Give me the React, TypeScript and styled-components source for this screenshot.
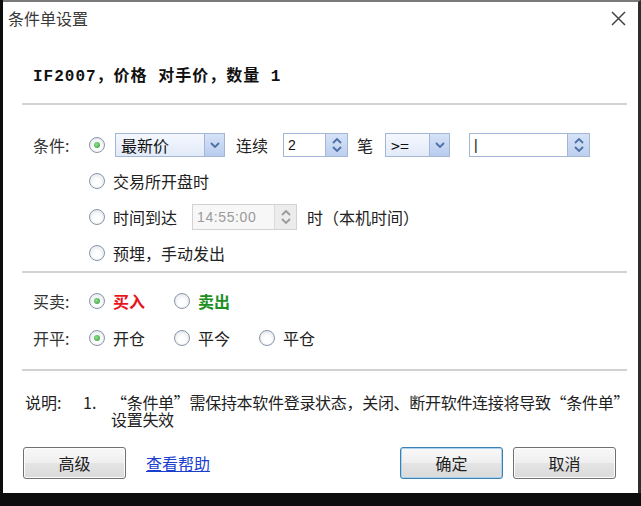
import React from "react";
import styled, { createGlobalStyle } from "styled-components";

const GlobalStyle = createGlobalStyle`
  body {
    margin: 0;
    background: #0d0d0d;
    font-family: "Noto Sans CJK SC", "Noto Sans", sans-serif;
  }
`;

const Chevron = ({ up = false, color = "#4d6fa8" }: { up?: boolean; color?: string }) => (
  <svg width="10" height="6" viewBox="0 0 10 6">
    <path
      d={up ? "M1 5 L5 1 L9 5" : "M1 1 L5 5 L9 1"}
      fill="none"
      stroke={color}
      strokeWidth="1.8"
    />
  </svg>
);

const SelectBox = ({ value, width, ml }: { value: string; width: number; ml: number }) => (
  <Select $w={width} $ml={ml}>
    <SelectValue>{value}</SelectValue>
    <DropButton>
      <Chevron />
    </DropButton>
  </Select>
);

const SpinBox = ({
  value,
  width,
  ml,
  disabled = false,
}: {
  value: string;
  width: number;
  ml: number;
  disabled?: boolean;
}) => (
  <Spin $w={width} $ml={ml} $disabled={disabled}>
    <SpinValue $disabled={disabled}>{value}</SpinValue>
    <SpinButton $disabled={disabled}>
      <Chevron up color={disabled ? "#9a9a9a" : "#4d6fa8"} />
      <Chevron color={disabled ? "#9a9a9a" : "#4d6fa8"} />
    </SpinButton>
  </Spin>
);

const RadioOption = ({
  checked = false,
  children,
  tone,
}: {
  checked?: boolean;
  children?: React.ReactNode;
  tone?: "buy" | "sell";
}) => (
  <Option>
    <Radio $checked={checked} />
    {children && <OptionText $tone={tone}>{children}</OptionText>}
  </Option>
);

const App = () => {
  return (
    <Frame>
      <GlobalStyle />
      <Dialog>
        <TitleBar>
          <Title>条件单设置</Title>
          <svg width="17" height="17" viewBox="0 0 17 17">
            <path d="M2 2 L15 15 M15 2 L2 15" stroke="#444" strokeWidth="1.5" />
          </svg>
        </TitleBar>

        <Summary>IF2007，价格 对手价，数量 1</Summary>
        <Divider />

        <ConditionSection>
          <Row>
            <Label>条件:</Label>
            <RadioOption checked />
            <SelectBox value="最新价" width={110} ml={10} />
            <Text $ml={11}>连续</Text>
            <SpinBox value="2" width={65} ml={15} />
            <Text $ml={9}>笔</Text>
            <SelectBox value=">=" width={65} ml={12} />
            <SpinBox value="|" width={121} ml={19} />
          </Row>
          <Row $indent>
            <RadioOption>交易所开盘时</RadioOption>
          </Row>
          <Row $indent>
            <RadioOption>时间到达</RadioOption>
            <SpinBox value="14:55:00" width={105} ml={15} disabled />
            <Text $ml={10}>时（本机时间）</Text>
          </Row>
          <Row $indent>
            <RadioOption>预埋，手动发出</RadioOption>
          </Row>
        </ConditionSection>
        <Divider />

        <TradeSection>
          <TradeRow>
            <Label>买卖:</Label>
            <Options>
              <RadioOption checked tone="buy">买入</RadioOption>
              <RadioOption tone="sell">卖出</RadioOption>
            </Options>
          </TradeRow>
          <TradeRow>
            <Label>开平:</Label>
            <Options>
              <RadioOption checked>开仓</RadioOption>
              <RadioOption>平今</RadioOption>
              <RadioOption>平仓</RadioOption>
            </Options>
          </TradeRow>
        </TradeSection>
        <Divider />

        <Note>
          <NoteLabel>说明:</NoteLabel>
          <NoteNum>1.</NoteNum>
          <NoteText>
            <NoteLine>“条件单”需保持本软件登录状态，关闭、断开软件连接将导致“条件单”</NoteLine>
            <NoteLine>设置失效</NoteLine>
          </NoteText>
        </Note>

        <Footer>
          <Button>高级</Button>
          <HelpLink href="#">查看帮助</HelpLink>
          <Spacer />
          <Button $primary>确定</Button>
          <Button>取消</Button>
        </Footer>
      </Dialog>
    </Frame>
  );
};

export default App;

const Frame = styled.div`
  width: 641px;
  height: 506px;
  background: #0d0d0d;
  overflow: hidden;
`;

const Dialog = styled.div`
  margin-left: 3px;
  width: 635px;
  height: 491px;
  border-top: 2px solid #7a7a7a;
  border-right: 3px solid #2e2e2e;
  background: #fff;
  display: flex;
  flex-direction: column;
`;

const TitleBar = styled.div`
  height: 32px;
  display: flex;
  align-items: center;
  justify-content: space-between;
  padding: 0 11px 0 5px;
`;

const Title = styled.span`
  font-size: 16px;
  color: #3a3a3a;
`;

const Summary = styled.div`
  margin: 33px 0 16px 30px;
  font-family: "Liberation Mono", "Noto Sans CJK SC", monospace;
  font-size: 16px;
  line-height: 20px;
  letter-spacing: 1px;
  font-weight: bold;
  color: #111;
`;

const Divider = styled.div`
  height: 2px;
  background: #d2d2d2;
  margin: 0 11px 0 19px;
`;

const ConditionSection = styled.div`
  padding: 22px 0 0 30px;
`;

const Row = styled.div<{ $indent?: boolean }>`
  height: 36px;
  display: flex;
  align-items: center;
  padding-left: ${(p) => (p.$indent ? "55px" : "0")};
`;

const Label = styled.span`
  width: 55px;
  font-size: 16px;
  color: #333;
`;

const Text = styled.span<{ $ml: number }>`
  margin-left: ${(p) => p.$ml}px;
  font-size: 16px;
  color: #222;
  white-space: nowrap;
`;

const Option = styled.label`
  display: flex;
  align-items: center;
  gap: 8px;
`;

const Radio = styled.span<{ $checked: boolean }>`
  box-sizing: border-box;
  width: 16px;
  height: 16px;
  margin-left: 1px;
  border-radius: 50%;
  border: 1px solid #8996a8;
  background: radial-gradient(circle at 50% 60%, #ffffff 30%, #d9dee6 100%);
  display: flex;
  align-items: center;
  justify-content: center;

  &::after {
    content: "";
    display: ${(p) => (p.$checked ? "block" : "none")};
    width: 6px;
    height: 6px;
    border-radius: 50%;
    background: radial-gradient(circle at 40% 40%, #8fe08f, #2e9a2e);
  }
`;

const OptionText = styled.span<{ $tone?: "buy" | "sell" }>`
  font-size: 16px;
  color: ${(p) => (p.$tone === "buy" ? "#e8141b" : p.$tone === "sell" ? "#1c8f22" : "#222")};
  font-weight: ${(p) => (p.$tone ? "bold" : "normal")};
  white-space: nowrap;
`;

const Select = styled.div<{ $w: number; $ml: number }>`
  box-sizing: border-box;
  width: ${(p) => p.$w}px;
  height: 24px;
  margin-left: ${(p) => p.$ml}px;
  border: 1px solid #a3b6d6;
  background: linear-gradient(#f4f7fd, #e2eaf8);
  display: flex;
`;

const SelectValue = styled.span`
  flex: 1;
  padding-left: 5px;
  font-size: 16px;
  line-height: 22px;
  color: #111;
`;

const DropButton = styled.span`
  width: 19px;
  border-left: 1px solid #a3b6d6;
  background: linear-gradient(#d6e3f7, #b8ccee);
  display: flex;
  align-items: center;
  justify-content: center;
`;

const Spin = styled.div<{ $w: number; $ml: number; $disabled: boolean }>`
  box-sizing: border-box;
  width: ${(p) => p.$w}px;
  height: ${(p) => (p.$disabled ? 26 : 24)}px;
  margin-left: ${(p) => p.$ml}px;
  border: 1px solid ${(p) => (p.$disabled ? "#d2d2d2" : "#a3b6d6")};
  background: ${(p) => (p.$disabled ? "#f7f7f7" : "#fff")};
  display: flex;
`;

const SpinValue = styled.span<{ $disabled: boolean }>`
  flex: 1;
  padding-left: 4px;
  font-family: "Liberation Sans", Arial, sans-serif;
  font-size: 14px;
  line-height: ${(p) => (p.$disabled ? 24 : 22)}px;
  letter-spacing: ${(p) => (p.$disabled ? "0.6px" : "0")};
  color: ${(p) => (p.$disabled ? "#9a9a9a" : "#111")};
`;

const SpinButton = styled.span<{ $disabled: boolean }>`
  width: 21px;
  border-left: 1px solid ${(p) => (p.$disabled ? "#dcdcdc" : "#a3b6d6")};
  background: ${(p) => (p.$disabled ? "#ececec" : "linear-gradient(#d6e3f7, #bccfee)")};
  display: flex;
  flex-direction: column;
  align-items: center;
  justify-content: center;
  gap: 2px;
`;

const TradeSection = styled.div`
  padding: 9px 0 13px 30px;
`;

const TradeRow = styled.div`
  height: 37px;
  display: flex;
  align-items: center;
`;

const Options = styled.div`
  display: flex;
  gap: 28px;
`;

const Note = styled.div`
  margin: 23px 0 0 22px;
  display: flex;
  font-size: 16px;
  line-height: 17px;
  color: #222;
`;

const NoteLabel = styled.span`
  width: 58px;
`;

const NoteNum = styled.span`
  width: 28px;
`;

const NoteText = styled.div`
  display: flex;
  flex-direction: column;
  letter-spacing: -0.3px;
`;

const NoteLine = styled.span`
  white-space: nowrap;
`;

const Footer = styled.div`
  margin-top: 19px;
  padding: 0 22px 0 20px;
  display: flex;
  align-items: center;
  gap: 10px;
`;

const Spacer = styled.div`
  flex: 1;
`;

const Button = styled.button<{ $primary?: boolean }>`
  box-sizing: border-box;
  width: 103px;
  height: 32px;
  border: 1px solid ${(p) => (p.$primary ? "#3c7fb1" : "#707070")};
  border-radius: 3px;
  box-shadow: inset 0 0 0 1px ${(p) => (p.$primary ? "#a8d2f2" : "#fcfcfc")};
  background: linear-gradient(#f8f8f8 0%, #efefef 50%, #e4e4e4 51%, #dadada 100%);
  font-family: "Noto Sans CJK SC", sans-serif;
  font-size: 16px;
  color: #222;
  padding: 0;
`;

const HelpLink = styled.a`
  margin-left: 10px;
  font-size: 16px;
  color: #1a3fcf;
  text-decoration: underline;
`;
